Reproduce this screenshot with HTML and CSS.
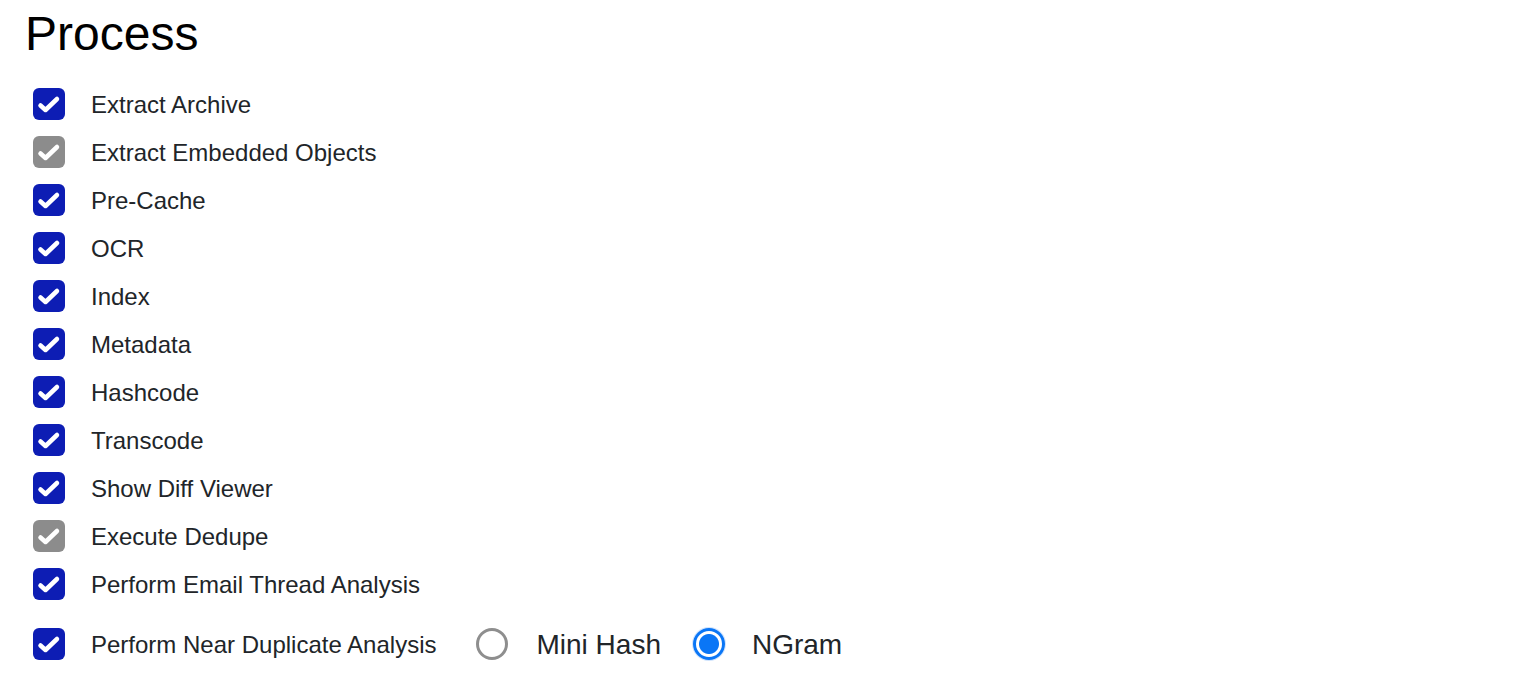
FILE: index.html
```html
<!DOCTYPE html>
<html lang="en">
<head>
    <meta charset="UTF-8">
    <meta name="viewport" content="width=device-width, initial-scale=1.0">
    <title>Process</title>
    <link rel="stylesheet" href="styles.css">
</head>
<body>
    <div class="process">
        <h1 class="title">Process</h1>
        <div class="options">
            <label class="option"><span class="check"><svg viewBox="0 0 32 32"><polyline points="7.5,17.5 12.5,22 24,11"/></svg></span><span class="text">Extract Archive</span></label>
            <label class="option"><span class="check disabled"><svg viewBox="0 0 32 32"><polyline points="7.5,17.5 12.5,22 24,11"/></svg></span><span class="text">Extract Embedded Objects</span></label>
            <label class="option"><span class="check"><svg viewBox="0 0 32 32"><polyline points="7.5,17.5 12.5,22 24,11"/></svg></span><span class="text">Pre-Cache</span></label>
            <label class="option"><span class="check"><svg viewBox="0 0 32 32"><polyline points="7.5,17.5 12.5,22 24,11"/></svg></span><span class="text">OCR</span></label>
            <label class="option"><span class="check"><svg viewBox="0 0 32 32"><polyline points="7.5,17.5 12.5,22 24,11"/></svg></span><span class="text">Index</span></label>
            <label class="option"><span class="check"><svg viewBox="0 0 32 32"><polyline points="7.5,17.5 12.5,22 24,11"/></svg></span><span class="text">Metadata</span></label>
            <label class="option"><span class="check"><svg viewBox="0 0 32 32"><polyline points="7.5,17.5 12.5,22 24,11"/></svg></span><span class="text">Hashcode</span></label>
            <label class="option"><span class="check"><svg viewBox="0 0 32 32"><polyline points="7.5,17.5 12.5,22 24,11"/></svg></span><span class="text">Transcode</span></label>
            <label class="option"><span class="check"><svg viewBox="0 0 32 32"><polyline points="7.5,17.5 12.5,22 24,11"/></svg></span><span class="text">Show Diff Viewer</span></label>
            <label class="option"><span class="check disabled"><svg viewBox="0 0 32 32"><polyline points="7.5,17.5 12.5,22 24,11"/></svg></span><span class="text">Execute Dedupe</span></label>
            <label class="option"><span class="check"><svg viewBox="0 0 32 32"><polyline points="7.5,17.5 12.5,22 24,11"/></svg></span><span class="text">Perform Email Thread Analysis</span></label>
            <div class="option near-dup">
                <label class="near-label"><span class="check"><svg viewBox="0 0 32 32"><polyline points="7.5,17.5 12.5,22 24,11"/></svg></span><span class="text">Perform Near Duplicate Analysis</span></label>
                <label class="radio-option"><span class="radio"></span><span class="text">Mini Hash</span></label>
                <label class="radio-option ngram"><span class="radio selected"></span><span class="text">NGram</span></label>
            </div>
        </div>
    </div>
</body>
</html>
```

FILE: styles.css
```css
body {
    margin: 0;
    font-family: "Liberation Sans", Arial, sans-serif;
    background-color: #fff;
}

.process {
    padding: 6px 25px;
}

.title {
    margin: 0;
    font-size: 48px;
    font-weight: normal;
    color: #000;
}

.options {
    display: flex;
    flex-direction: column;
    gap: 16px;
    margin-top: 27px;
    padding-left: 8px;
}

.option,
.near-label {
    display: flex;
    align-items: center;
    height: 32px;
    font-size: 24px;
    color: #212529;
}

.text {
    margin-top: 2px;
}

.check {
    width: 32px;
    height: 32px;
    border-radius: 6px;
    background-color: #0d1db4;
    margin-right: 26px;
    flex-shrink: 0;
}

.check svg {
    display: block;
    width: 32px;
    height: 32px;
    fill: none;
    stroke: #fff;
    stroke-width: 4.5;
    stroke-linecap: round;
    stroke-linejoin: round;
}

/* greyed out options */
.check.disabled {
    background-color: #8c8c8c;
}

.near-dup {
    margin-top: 12px;
}

.radio-option {
    display: flex;
    align-items: center;
    font-size: 28px;
    color: #212529;
    margin-left: 40px;
}

.radio-option.ngram {
    margin-left: 32px;
}

.radio {
    width: 32px;
    height: 32px;
    box-sizing: border-box;
    border: 3px solid #8e8e8e;
    border-radius: 50%;
    margin-right: 28px;
    background-color: #fff;
}

.radio.selected {
    border-color: #0a76f6;
    box-shadow: 0 0 0 1px #cfe3fd;
    background: radial-gradient(circle, #0a76f6 0, #0a76f6 9.5px, #fff 10.5px);
    margin-right: 27px;
}
```
